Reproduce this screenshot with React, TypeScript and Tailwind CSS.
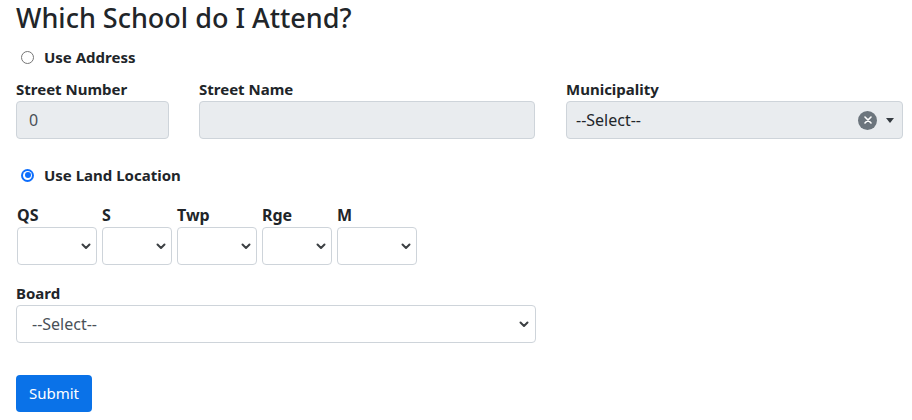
import React from "react";

const Chevron = () => (
  <svg width="10" height="7" viewBox="0 0 10 7" className="shrink-0">
    <path d="M1.5 1.5l3.5 3.5 3.5-3.5" fill="none" stroke="#3c4043" strokeWidth="2" strokeLinecap="round" strokeLinejoin="round" />
  </svg>
);

const SmallSelect = ({ label, w }: { label: string; w: string }) => (
  <div className={`flex flex-col shrink-0 ${w}`}>
    <div className="h-[24px] leading-[24px] font-bold text-[16px] text-[#212529]">{label}</div>
    <div className="h-[38px] border border-[#ced4da] rounded-[4px] bg-white flex items-center justify-end pr-[5px]">
      <Chevron />
    </div>
  </div>
);

const Radio = ({ checked, label }: { checked?: boolean; label: string }) => (
  <div className="flex items-center h-[24px] pl-[5px]">
    {checked ? (
      <span className="w-[13px] h-[13px] rounded-full bg-[#0d6efd] flex items-center justify-center">
        <span className="w-[9px] h-[9px] rounded-full bg-white flex items-center justify-center">
          <span className="w-[6px] h-[6px] rounded-full bg-[#0d6efd]" />
        </span>
      </span>
    ) : (
      <span className="w-[13px] h-[13px] rounded-full border border-[#767676] bg-white" />
    )}
    <span className="ml-[10px] font-bold text-[15px] text-[#212529]">{label}</span>
  </div>
);

export default function App() {
  return (
    <div className="bg-white w-[912px] h-[420px] overflow-hidden pl-[16px] text-[#212529]" style={{ fontFamily: '"Segoe UI", "Noto Sans", sans-serif' }}>
      <h3 className="text-[27px] font-medium leading-[34px] m-0 text-[#212529] pt-[1px]">Which School do I Attend?</h3>
      <div className="mt-[10px]">
        <Radio label="Use Address" />
      </div>
      <div className="flex mt-[8px]">
        <div className="w-[153px] shrink-0 flex flex-col">
          <div className="h-[24px] leading-[24px] font-bold text-[15px]">Street Number</div>
          <div className="h-[38px] border border-[#ced4da] rounded-[4px] bg-[#e9ecef] flex items-center px-[12px] text-[16px] text-[#495057]">0</div>
        </div>
        <div className="w-[336px] shrink-0 ml-[30px] flex flex-col">
          <div className="h-[24px] leading-[24px] font-bold text-[15px]">Street Name</div>
          <div className="h-[38px] border border-[#ced4da] rounded-[4px] bg-[#e9ecef]" />
        </div>
        <div className="w-[337px] shrink-0 ml-[31px] flex flex-col">
          <div className="h-[24px] leading-[24px] font-bold text-[15px]">Municipality</div>
          <div className="h-[38px] border border-[#ced4da] rounded-[4px] bg-[#e9ecef] flex items-center pl-[9px] pr-[8px] text-[16px] text-[#212529]">
            <span className="flex-1">--Select--</span>
            <span className="w-[19px] h-[19px] rounded-full bg-[#6c757d] flex items-center justify-center">
              <svg width="8" height="8" viewBox="0 0 8 8">
                <path d="M1 1l6 6M7 1l-6 6" stroke="white" strokeWidth="1.6" strokeLinecap="round" />
              </svg>
            </span>
            <svg width="8" height="5" viewBox="0 0 8 5" className="ml-[9px]">
              <path d="M0 0h8L4 5z" fill="#343a40" />
            </svg>
          </div>
        </div>
      </div>
      <div className="mt-[24px]">
        <Radio checked label="Use Land Location" />
      </div>
      <div className="flex gap-[5px] mt-[16px] ml-[1px]">
        <SmallSelect label="QS" w="w-[80px]" />
        <SmallSelect label="S" w="w-[70px]" />
        <SmallSelect label="Twp" w="w-[80px]" />
        <SmallSelect label="Rge" w="w-[70px]" />
        <SmallSelect label="M" w="w-[80px]" />
      </div>
      <div className="mt-[16px] w-[520px] flex flex-col">
        <div className="h-[24px] leading-[24px] font-bold text-[15px]">Board</div>
        <div className="h-[38px] border border-[#ced4da] rounded-[4px] bg-white flex items-center pl-[15px] pr-[6px] text-[16px] text-[#495057]">
          <span className="flex-1">--Select--</span>
          <Chevron />
        </div>
      </div>
      <button className="mt-[32px] h-[37px] w-[76px] rounded-[4px] bg-[#0a72e8] text-white text-[15px] flex items-center justify-center">Submit</button>
    </div>
  );
}
